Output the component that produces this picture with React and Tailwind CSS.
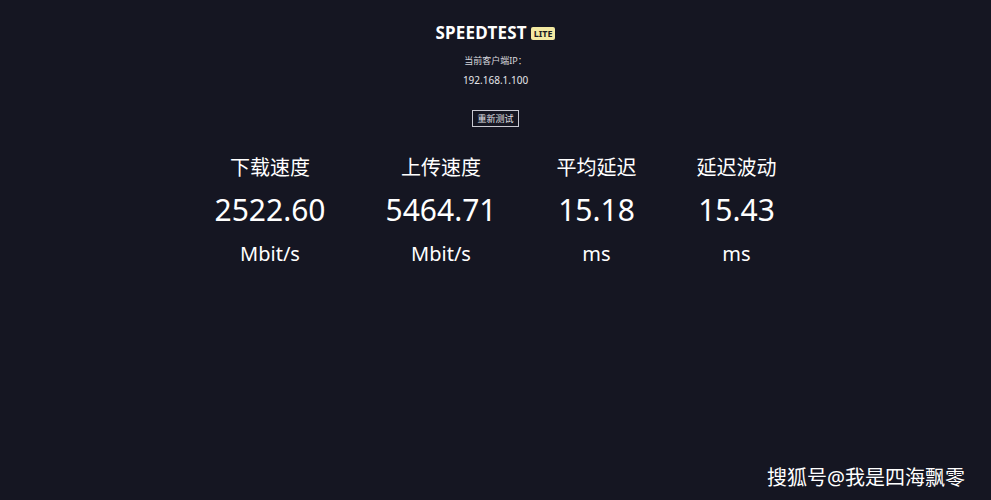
export default function App() {
  const stats = [
    { label: "下载速度", value: "2522.60", unit: "Mbit/s" },
    { label: "上传速度", value: "5464.71", unit: "Mbit/s" },
    { label: "平均延迟", value: "15.18", unit: "ms" },
    { label: "延迟波动", value: "15.43", unit: "ms" },
  ];

  return (
    <div
      className="relative flex flex-col items-center h-[500px] w-full bg-[#151622] text-white overflow-hidden"
      style={{ fontFamily: '"Noto Sans", "Noto Sans CJK SC", sans-serif' }}
    >
      {/* Header */}
      <div className="flex items-center gap-[4px] mt-[22px]">
        <span className="text-[17px] font-bold tracking-[0.2px] leading-[22px]">SPEEDTEST</span>
        <span className="bg-[#f3e9a2] text-[#1a1a22] text-[9px] font-bold leading-[13px] px-[3px] rounded-[2px]">
          LITE
        </span>
      </div>
      <div className="mt-[11px] text-[9px] leading-[12px] text-[#d8d8de]">当前客户端IP：</div>
      <div className="mt-[6px] text-[10px] leading-[14px] text-[#e6e6ea]">192.168.1.100</div>

      <button className="mt-[23px] border border-[#c9c9d2] text-[9px] leading-[11px] px-[4px] py-[2px] text-[#e0e0e6]">
        重新测试
      </button>

      {/* Stats */}
      <div className="flex gap-[60px] mt-[28px]">
        {stats.map((s) => (
          <div key={s.label} className="flex flex-col items-center">
            <div className="text-[20px] leading-[26px]">{s.label}</div>
            <div className="text-[30px] leading-[36px] mt-[11px]">{s.value}</div>
            <div className="text-[20px] leading-[26px] mt-[13px]">{s.unit}</div>
          </div>
        ))}
      </div>

      {/* Watermark */}
      <div className="absolute right-[26px] bottom-[9px] text-[20px] leading-[26px] text-white">
        搜狐号@我是四海飘零
      </div>
    </div>
  );
}
